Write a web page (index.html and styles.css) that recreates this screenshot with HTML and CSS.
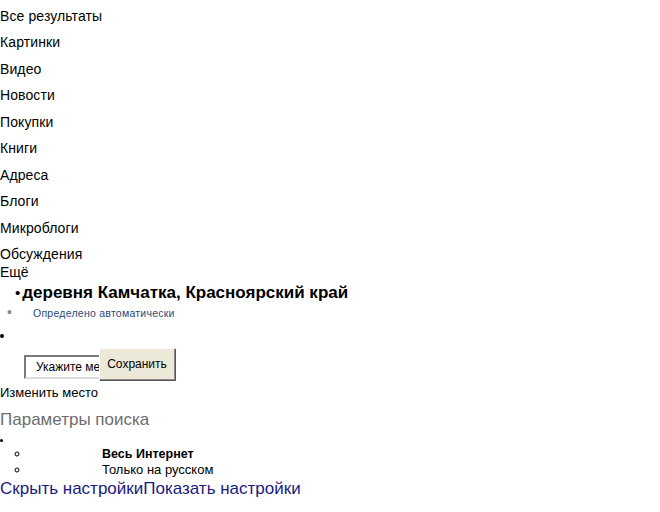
FILE: index.html
```
<!DOCTYPE html>
<html>
<head>
<meta charset="utf-8">
<link rel="stylesheet" href="styles.css">
</head>
<body>
<div class="nav">
  <div class="nav-item">Все результаты</div>
  <div class="nav-item">Картинки</div>
  <div class="nav-item">Видео</div>
  <div class="nav-item">Новости</div>
  <div class="nav-item">Покупки</div>
  <div class="nav-item">Книги</div>
  <div class="nav-item">Адреса</div>
  <div class="nav-item">Блоги</div>
  <div class="nav-item">Микроблоги</div>
  <div class="nav-item last">Обсуждения</div>
  <div class="more">Ещё</div>
</div>
<ul class="loc">
  <li class="loc-name">деревня Камчатка, Красноярский край</li>
</ul>
<ul class="auto">
  <li>Определено автоматически</li>
</ul>
<ul class="form-list">
  <li>
    <div class="form-row">
      <input class="place-input" type="text" value="Укажите место">
      <button class="save-btn">Сохранить</button>
    </div>
  </li>
</ul>
<div class="change">Изменить место</div>
<div class="params">Параметры поиска</div>
<ul class="outer">
  <li>
    <ul class="inner">
      <li class="bold">Весь Интернет</li>
      <li>Только на русском</li>
    </ul>
  </li>
</ul>
<div class="links"><a class="lnk">Скрыть настройки</a><a class="lnk">Показать настройки</a></div>
</body>
</html>
```
FILE: styles.css
```
html, body {
  margin: 0;
  padding: 0;
  background: #fff;
  font-family: "Liberation Sans", Arial, sans-serif;
  color: #000;
}
.nav {
  padding-top: 8px;
}
.nav-item {
  font-size: 14px;
  line-height: 17px;
  height: 17px;
  margin-bottom: 9.44px;
  letter-spacing: 0.1px;
}
.nav-item.last {
  margin-bottom: 1px;
}
.more {
  font-size: 14px;
  line-height: 17px;
}
ul {
  margin: 0;
  padding: 0;
}
.loc {
  list-style: none;
  padding-left: 15px;
  margin-top: 2px;
}
.loc-name {
  font-size: 17px;
  font-weight: bold;
  line-height: 19px;
}
.loc-name::before {
  content: "•";
  font-weight: normal;
  font-size: 15px;
  margin-right: 2px;
}
.auto {
  list-style: none;
  padding-left: 0;
  margin-top: 4px;
  font-size: 10.5px;
  line-height: 12px;
  letter-spacing: 0.25px;
}
.auto li {
  color: #2b4a7a;
}
.auto li::before {
  content: "•";
  display: inline-block;
  width: 26px;
  padding-left: 7px;
  color: #8a8a8a;
  font-size: 14px;
  letter-spacing: 0;
}
.form-list {
  list-style: disc inside;
  padding-left: 0;
  margin-top: 8px;
}
.form-list > li {
  line-height: 16px;
  font-size: 12px;
}
.form-row {
  display: flex;
  align-items: flex-start;
  padding-top: 5px;
  padding-left: 24px;
}
.place-input {
  height: 20px;
  width: 63px;
  margin: 7px 0 0 0;
  padding: 0 0 0 10px;
  border: 2px solid #7a7a7a;
  border-right: none;
  border-bottom-color: #dcdcdc;
  font-family: "Liberation Sans", Arial, sans-serif;
  font-size: 12px;
  box-sizing: content-box;
}
.save-btn {
  width: 76px;
  height: 32px;
  background: #ece9d8;
  border: 1px solid;
  border-color: #fff #8a8a8a #8a8a8a #fff;
  box-shadow: 1px 1px 0 #555;
  font-family: "Liberation Sans", Arial, sans-serif;
  font-size: 12px;
  padding: 0;
  margin: 0;
  color: #000;
}
.change {
  font-size: 13px;
  line-height: 15px;
  margin-top: 5px;
}
.params {
  font-size: 17px;
  line-height: 20px;
  color: #6e6e6e;
  margin-top: 10px;
}
.outer {
  list-style: disc inside;
  padding-left: 0;
  margin-top: 2px;
  font-size: 11px;
  line-height: 14px;
}
.inner {
  list-style: circle;
  padding-left: 30px;
  font-size: 13px;
  line-height: 16px;
}
.inner li {
  padding-left: 72px;
}
.inner li::marker {
  font-size: 13px;
}
.inner li.bold {
  font-weight: bold;
  font-size: 12.5px;
}
.links {
  font-size: 17px;
  line-height: 20px;
  color: #1a1a80;
  margin-top: 1px;
}
.lnk {
  color: #1a1a80;
}
```
